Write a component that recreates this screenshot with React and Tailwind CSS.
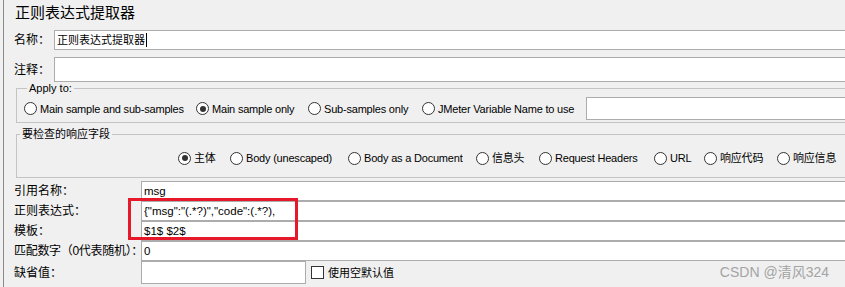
import React from 'react'

const FONT = 'font-["Liberation_Sans","Noto_Sans_CJK_SC",sans-serif]'

function Radio({ checked, label, className }) {
  return (
    <div className={`flex shrink-0 items-center gap-[3px] ${className}`}>
      <span className="flex h-[13px] w-[13px] items-center justify-center rounded-full border border-[#333] bg-white">
        {checked && <span className="h-[6px] w-[6px] rounded-full bg-[#333]" />}
      </span>
      <span className="whitespace-nowrap text-[11px] tracking-[-0.2px] leading-[14px]">{label}</span>
    </div>
  )
}

function Field({ label, children, height = 'h-[20px]', labelClass = '' }) {
  return (
    <div className={`flex items-center ${height}`}>
      <span className={`w-[127px] shrink-0 whitespace-nowrap text-[12px] leading-[14px] ${labelClass}`}>{label}</span>
      {children}
    </div>
  )
}

export default function App() {
  return (
    <div className={`relative h-[287px] w-[845px] overflow-hidden bg-[#f0f0f0] text-black ${FONT}`}>
      <div className="ml-[3px] h-full w-[900px] border-l border-[#8a8a8a] pl-[10px]">
        {/* title */}
        <div className="h-[30px] pl-[1px] pt-[4px] text-[15px] leading-[18px]">正则表达式提取器</div>

        {/* name */}
        <div className="flex h-[20px] items-center">
          <span className="w-[40px] shrink-0 text-[12px] leading-[14px]">名称：</span>
          <div className="flex h-[20px] flex-1 items-center border border-[#acacac] bg-white pl-[2px] text-[11px] leading-[14px]">
            正则表达式提取器
            <span className="ml-[1px] h-[14px] w-[1px] bg-black" />
          </div>
        </div>

        {/* comment */}
        <div className="mt-[7px] flex h-[25px] items-center">
          <span className="w-[40px] shrink-0 text-[12px] leading-[14px]">注释：</span>
          <div className="h-[25px] flex-1 border border-[#acacac] bg-white" />
        </div>

        {/* apply to */}
        <fieldset className="ml-[2px] border border-[#c4c4c4] pb-[2px] pl-[7px] pt-[3px]">
          <legend className="ml-[3px] px-[2px] text-[11px] leading-[12px]">Apply to:</legend>
          <div className="flex h-[23px] items-center">
            <Radio className="w-[172px]" label="Main sample and sub-samples" />
            <Radio className="w-[112px]" checked label="Main sample only" />
            <Radio className="w-[114px]" label="Sub-samples only" />
            <Radio className="w-[164px]" label="JMeter Variable Name to use" />
            <div className="h-[23px] flex-1 border border-[#acacac] bg-white" />
          </div>
        </fieldset>

        {/* response field */}
        <fieldset className="ml-[2px] mt-[5px] border border-[#c4c4c4] pb-[9px] pl-[161px] pt-[8px]">
          <legend className="-ml-[158px] px-[2px] text-[11px] leading-[12px]">要检查的响应字段</legend>
          <div className="flex h-[20px] items-center">
            <Radio className="w-[52px]" checked label="主体" />
            <Radio className="w-[118px]" label="Body (unescaped)" />
            <Radio className="w-[128px]" label="Body as a Document" />
            <Radio className="w-[63px]" label="信息头" />
            <Radio className="w-[115px]" label="Request Headers" />
            <Radio className="w-[50px]" label="URL" />
            <Radio className="w-[73px]" label="响应代码" />
            <Radio label="响应信息" />
          </div>
        </fieldset>

        {/* extractor fields */}
        <div className="mt-[3px] flex flex-col text-[11.5px]">
          <Field label="引用名称：">
            <div className="flex h-[20px] flex-1 items-center border border-[#acacac] bg-white pl-[2px] leading-[14px]">msg</div>
          </Field>
          <Field label="正则表达式：">
            <div className="flex h-[20px] flex-1 items-center border border-[#acacac] bg-white pl-[2px] leading-[14px]">
              {'{"msg":"(.*?)","code":(.*?),'}
            </div>
          </Field>
          <Field label="模板：">
            <div className="flex h-[20px] flex-1 items-center border border-[#acacac] bg-white pl-[2px] leading-[14px]">$1$ $2$</div>
          </Field>
          <Field label="匹配数字（0代表随机）：" labelClass="text-[11px] tracking-[-0.3px]">
            <div className="flex h-[20px] flex-1 items-center border border-[#acacac] bg-white pl-[2px] leading-[14px]">0</div>
          </Field>
          <Field label="缺省值：" height="h-[23px]">
            <div className="h-[23px] w-[165px] border border-[#acacac] bg-white" />
            <span className="ml-[5px] h-[13px] w-[13px] border border-[#333] bg-white" />
            <span className="ml-[4px] text-[11px] leading-[14px]">使用空默认值</span>
          </Field>
        </div>
      </div>

      {/* annotation */}
      <div className="absolute left-[128px] top-[198px] h-[42px] w-[170px] border-[3px] border-[#e6182a]" />

      {/* watermark */}
      <div className="absolute bottom-[7px] right-[16px] text-[14px] leading-[16px] text-[#a4a4a4]">CSDN @清风324</div>
    </div>
  )
}
